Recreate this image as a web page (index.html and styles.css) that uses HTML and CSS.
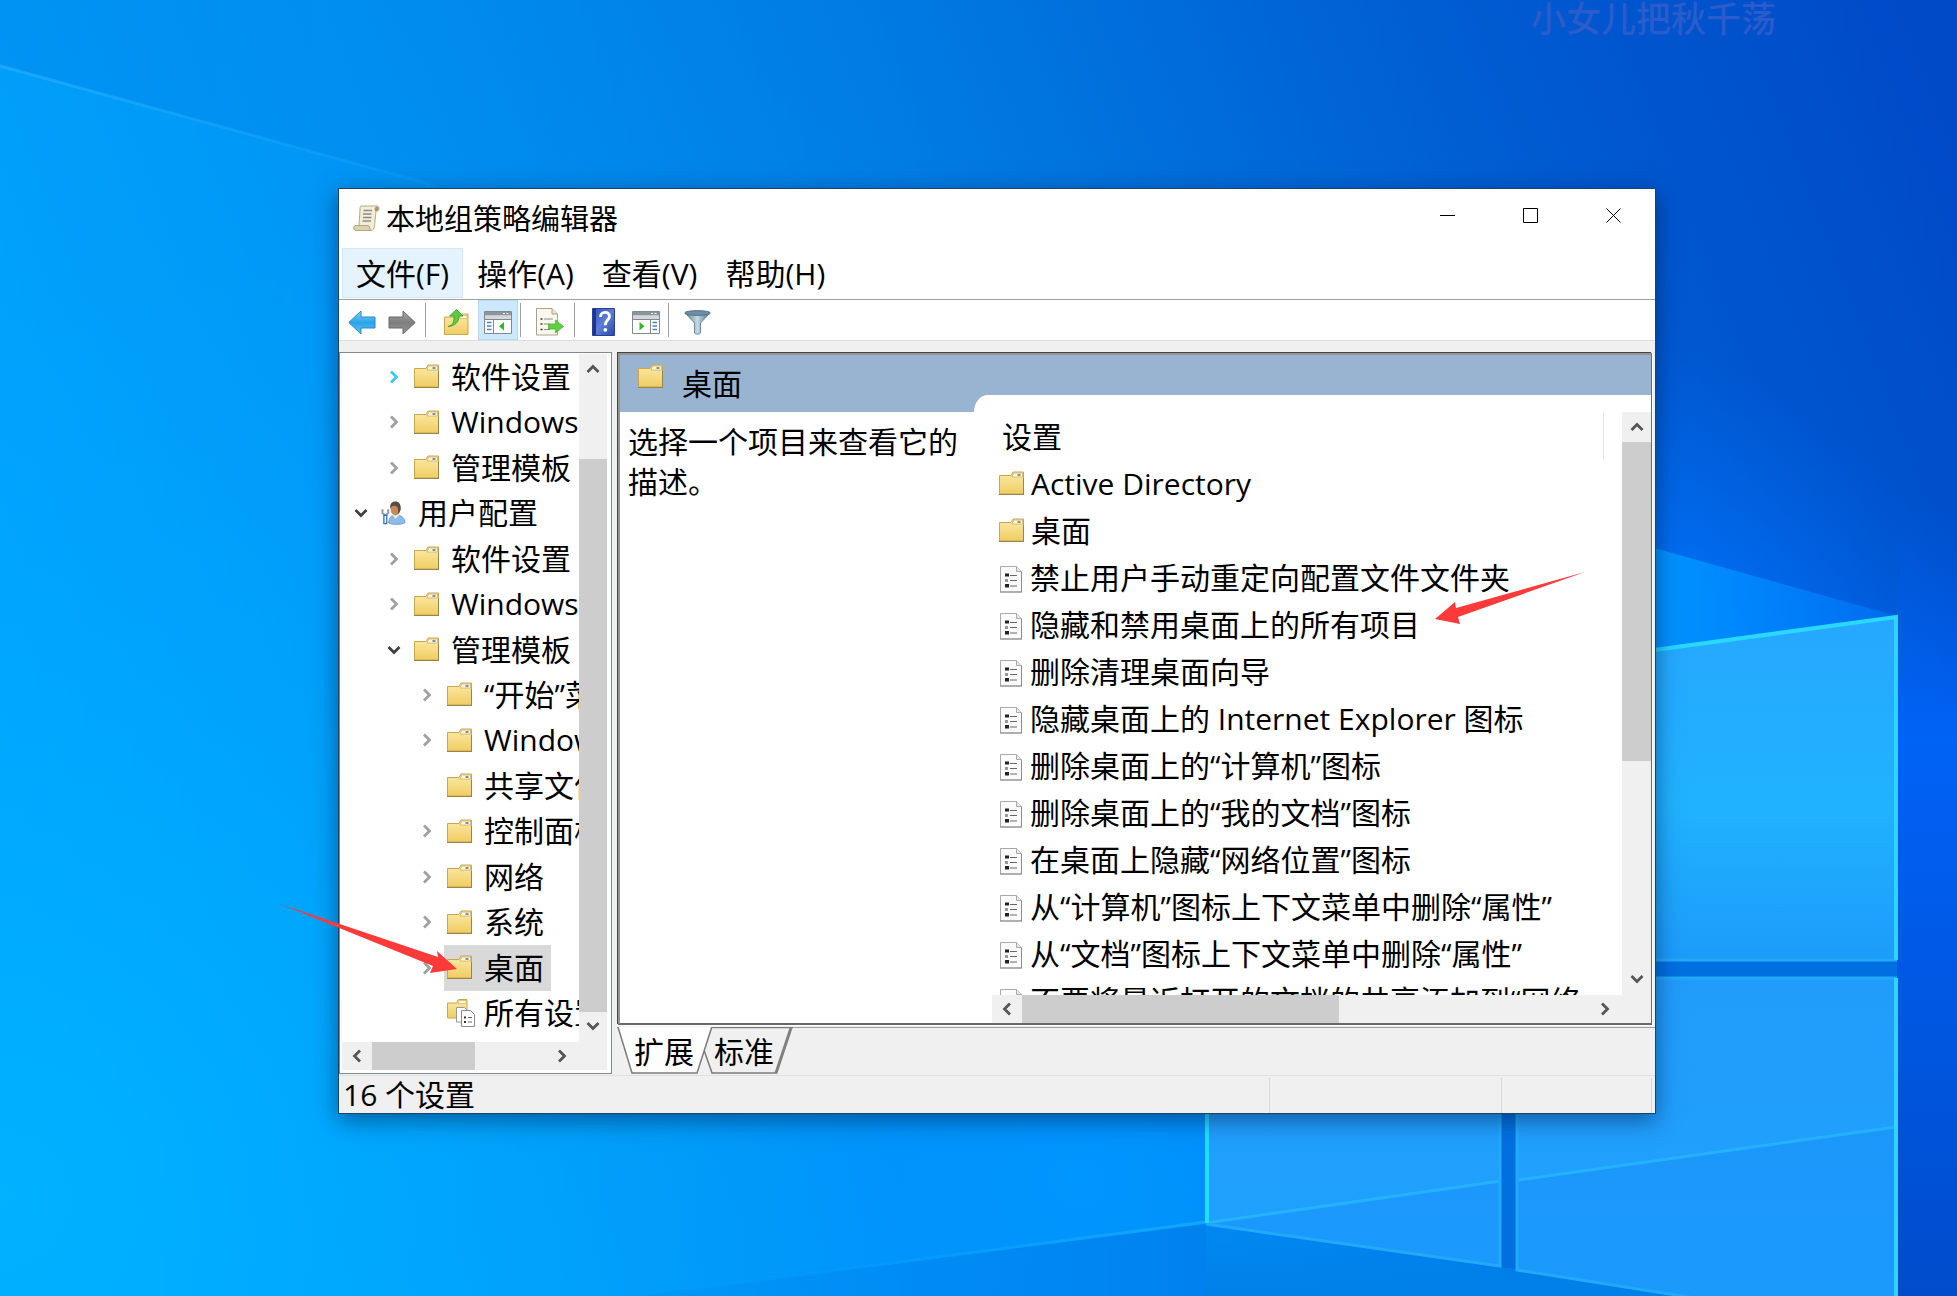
FILE: index.html
```html
<!DOCTYPE html>
<html lang="zh-CN">
<head>
<meta charset="utf-8">
<title>本地组策略编辑器</title>
<link rel="stylesheet" href="styles.css">
</head>
<body>
<svg class="sprites" aria-hidden="true">
  <defs>
    <linearGradient id="gFolder" x1="0" y1="0" x2="0" y2="1"><stop offset="0" stop-color="#fdeaa8"/><stop offset="1" stop-color="#f0cd62"/></linearGradient>
    <linearGradient id="gBlue" x1="0" y1="0" x2="0" y2="1"><stop offset="0" stop-color="#8fd4f8"/><stop offset=".5" stop-color="#2ba3ea"/><stop offset="1" stop-color="#5cc4f5"/></linearGradient>
    <linearGradient id="gGray" x1="0" y1="0" x2="0" y2="1"><stop offset="0" stop-color="#a8a8a8"/><stop offset=".5" stop-color="#7e7e7e"/><stop offset="1" stop-color="#989898"/></linearGradient>
    <linearGradient id="gHelp" x1="0" y1="0" x2="1" y2="1"><stop offset="0" stop-color="#2f4fb8"/><stop offset=".5" stop-color="#5d7fd8"/><stop offset="1" stop-color="#2745a8"/></linearGradient>
    <linearGradient id="gFunnel" x1="0" y1="0" x2="1" y2="0"><stop offset="0" stop-color="#5a7b92"/><stop offset=".5" stop-color="#c4d9e6"/><stop offset="1" stop-color="#456880"/></linearGradient>
  </defs>
  <symbol id="folder" viewBox="0 0 25 24">
    <path d="M.5 4.500h11.500l2-3.500h10.500v22h-24z" fill="url(#gFolder)" stroke="#c9a650"/>
    <path d="M14.500 2h9v4h-10.500z" fill="#fff8dc" stroke="#cdb06a" stroke-width=".8"/>
    <path d="M18.500 3h3v2h-3z" fill="#7d93a5"/>
    <path d="M0 23.500h25M24.500 7v16" stroke="#9a8448" fill="none"/>
  </symbol>
  <symbol id="policy" viewBox="0 0 24 27">
    <path d="M1.500.5h16l5 5v20.500h-21z" fill="#fbfbfb" stroke="#a9a9a9"/>
    <path d="M17.500.5v5h5" fill="#e8e8e8" stroke="#a9a9a9"/>
    <path d="M1 26h22M22.500 6v20" stroke="#8c8c8c" fill="none"/>
    <path d="M6 7.500h4v3H6zM6 18h4v3.500H6z" fill="#222"/><path d="M6 13h3v3H6z" fill="#999"/>
    <path d="M11 9.500h7M11 14.500h7M11 20h7" stroke="#666"/>
  </symbol>
  <symbol id="allset" viewBox="0 0 30 28">
    <path d="M.5 4h9l2-3.500h8.500v18.500h-19.500z" fill="url(#gFolder)" stroke="#c9a650"/>
    <path d="M12 1.500h7v3h-8z" fill="#fff8dc" stroke="#cdb06a" stroke-width=".7"/>
    <path d="M9.500 8.500h8l3 3v11.500h-11z" fill="#fff" stroke="#999"/>
    <path d="M14.500 11.500h9l4 4v12h-13z" fill="#fff" stroke="#8a8a8a"/>
    <path d="M17 17.500h2v2h-2zM17 22h2v2h-2z" fill="#333"/><path d="M21 18.500h4M21 23h4" stroke="#666"/>
  </symbol>
  <symbol id="user" viewBox="0 0 26 25">
    <path d="M8 23c0-6 3-8.500 8-8.500s9 3.500 9 8c-3 2.500-14 2.500-17 .5z" fill="#8bbbe8" stroke="#5f93c9" stroke-width=".8"/>
    <path d="M12 14.500l3 4 4-4z" fill="#e6f0fa"/>
    <ellipse cx="15" cy="8.500" rx="5" ry="6.500" fill="#c48a5c"/>
    <path d="M9.500 8C9 2 12 .5 15 .5c4 0 6 3 5.500 8.500-1 3-2 4-3 4.500 1-5 0-8-3-8.500-2 0-4 .5-5 3z" fill="#5a4a3e"/>
    <path d="M1.500 8.500v4l3 2.500 3-2.500v-4" fill="none" stroke="#8b97a3" stroke-width="2"/>
    <path d="M3 15h3v8.500H3z" fill="#fff" stroke="#2d6cc0" stroke-width="1.300"/>
  </symbol>
  <symbol id="scroll" viewBox="0 0 27 27">
    <path d="M8 1h16c2.500 0 2.500 4 .5 5H23L21.500 21c-.3 3-1.500 4.500-3.500 4.500H3.500c-3 0-3-5-.5-5h3L7 5C7 3 7 1.500 8 1z" fill="#f3edd8" stroke="#b5ab8c"/>
    <path d="M2.500 20.500h12.500c2.500 0 1 5 3.500 5h-15c-3.500 0-3.500-5-1-5z" fill="#ddd2ae" stroke="#b0a584"/>
    <path d="M22 6c-1-2 0-4.500 2-4.500 2 0 2.500 3.500.5 4.500z" fill="#a89a6c"/>
    <path d="M10.500 5.500h8.500M10 9h8.500M10 12.500h8.500M9.500 16h8.500" stroke="#8c8c8a" stroke-width="1.500"/>
  </symbol>
  <symbol id="arrow" viewBox="0 0 28 25">
    <path d="M.8 12.500L13 1v6h14v11H13v6z"/>
  </symbol>
  <symbol id="folderup" viewBox="0 0 26 28">
    <path d="M1.500 9h10l2-3h11.500v20.500h-23.500z" fill="url(#gFolder)" stroke="#c9a650"/>
    <path d="M17 7.500h7v3h-7z" fill="#fff8dc" stroke="#cdb06a" stroke-width=".7"/>
    <path d="M5 18.500c5-1 6-4 6-10.500H6.500L13.500 1.500 20 8h-4c0 6-4 10-11 10.500z" fill="#5ccb3f" stroke="#2f9a22" stroke-width=".8"/>
  </symbol>
  <symbol id="treepane" viewBox="0 0 28 23">
    <path d="M.5.5h27v22H.5z" fill="#fff" stroke="#808890"/>
    <path d="M1 1h26v3.500H1z" fill="#8c949c"/><path d="M19 2.500h2m1.500 0h2" stroke="#fff"/>
    <path d="M1 5h26v3H1z" fill="#d4d8dc"/>
    <path d="M9.500 8v14.500M1 8.500h26" stroke="#808890"/>
    <path d="M3 11.500h4.500M3 15h4.500M3 18.500h4.500" stroke="#4f83b8" stroke-width="1.500"/>
    <path d="M20 11v8.500l-5-4.200z" fill="#38b32c"/>
  </symbol>
  <symbol id="actionpane" viewBox="0 0 28 23">
    <path d="M.5.5h27v22H.5z" fill="#fff" stroke="#808890"/>
    <path d="M1 1h26v3.500H1z" fill="#8c949c"/><path d="M19 2.500h2m1.500 0h2" stroke="#fff"/>
    <path d="M1 5h26v3H1z" fill="#d4d8dc"/>
    <path d="M18.500 8v14.500M1 8.500h26" stroke="#808890"/>
    <path d="M20.500 11.500h4.500M20.500 15h4.500M20.500 18.500h4.500" stroke="#4f83b8" stroke-width="1.500"/>
    <path d="M7.500 11v8.500l5-4.200z" fill="#38b32c"/>
  </symbol>
  <symbol id="export" viewBox="0 0 28 28">
    <path d="M.5.500h15.500l5.500 5.500v21h-21z" fill="#fbf9ee" stroke="#a6a290"/>
    <path d="M16 .5v5.500h5.500" fill="#e8e4d0" stroke="#a6a290"/>
    <path d="M4.500 11h2M4.500 16h2M4.500 21.500h2" stroke="#333" stroke-width="1.500"/><path d="M8 11h9M8 16h6M8 21.500h6" stroke="#888"/>
    <path d="M12.500 16h7v-4l8 6.500-8 6.500V21h-7z" fill="#5fd042" stroke="#4db336" stroke-width=".8"/>
  </symbol>
  <symbol id="help" viewBox="0 0 23 28">
    <path d="M.5.5h22v27H.5z" fill="url(#gHelp)" stroke="#2a3f96"/><path d="M2.500 1v26" stroke="#1d3490" stroke-width="3"/>
    <path d="M8.500 9c0-6 9-6 9-.8 0 4-4.200 3.800-4.200 9" fill="none" stroke="#fff" stroke-width="2.800"/>
    <circle cx="13.300" cy="21.800" r="1.900" fill="#fff"/>
  </symbol>
  <symbol id="funnel" viewBox="0 0 27 25">
    <path d="M1 3l9.500 10v10c1 1.500 5 1.500 6 0V13L26 3z" fill="url(#gFunnel)" stroke="#6d8ca1"/>
    <ellipse cx="13.500" cy="3" rx="12.800" ry="2.400" fill="#6d8ea5" stroke="#55748a"/>
  </symbol>
  <symbol id="chev" viewBox="0 0 16 16"><path d="M5 2.500l5.500 5.500-5.500 5.500" fill="none" stroke="currentColor" stroke-width="2.800"/></symbol>
</svg>

<svg class="wallpaper" viewBox="0 0 1957 1296" preserveAspectRatio="none" aria-hidden="true">
  <defs>
    <linearGradient id="sky" x1="0" y1="900" x2="1957" y2="150" gradientUnits="userSpaceOnUse">
      <stop offset="0" stop-color="#00a8ff"/><stop offset=".3" stop-color="#0094f4"/><stop offset=".55" stop-color="#007ae2"/><stop offset=".8" stop-color="#005cd2"/><stop offset="1" stop-color="#004ac8"/>
    </linearGradient>
    <radialGradient id="corner" cx="0" cy="1200" r="1000" gradientUnits="userSpaceOnUse"><stop offset="0" stop-color="#00b2ff"/><stop offset="1" stop-color="#00a0ff" stop-opacity="0"/></radialGradient>
    <radialGradient id="glow" cx="1500" cy="850" r="540" gradientUnits="userSpaceOnUse"><stop offset="0" stop-color="#008cff"/><stop offset=".6" stop-color="#0074fc" stop-opacity=".8"/><stop offset="1" stop-color="#0068f0" stop-opacity="0"/></radialGradient>
    <radialGradient id="glow2" cx="1080" cy="1180" r="440" gradientUnits="userSpaceOnUse"><stop offset="0" stop-color="#0096ff"/><stop offset=".5" stop-color="#0096ff" stop-opacity=".7"/><stop offset="1" stop-color="#009cff" stop-opacity="0"/></radialGradient>
    <linearGradient id="shade" x1="0" y1="0" x2="900" y2="0" gradientUnits="userSpaceOnUse"><stop offset="0" stop-color="#006cd8" stop-opacity=".22"/><stop offset="1" stop-color="#006cd8" stop-opacity="0"/></linearGradient>
    <linearGradient id="foot" x1="0" y1="1200" x2="0" y2="1296" gradientUnits="userSpaceOnUse"><stop offset="0" stop-color="#0084ee" stop-opacity=".5"/><stop offset="1" stop-color="#0080e8"/></linearGradient>
    <linearGradient id="footL" x1="640" y1="0" x2="1206" y2="0" gradientUnits="userSpaceOnUse"><stop offset="0" stop-color="#0088f0" stop-opacity=".2"/><stop offset="1" stop-color="#0080ec" stop-opacity=".9"/></linearGradient>
    <linearGradient id="beam" x1="0" y1="0" x2="1" y2="0"><stop offset="0" stop-color="#2cb4ff"/><stop offset="1" stop-color="#2cb4ff" stop-opacity=".25"/></linearGradient>
    <linearGradient id="beam2" x1="640" y1="0" x2="1206" y2="0" gradientUnits="userSpaceOnUse"><stop offset="0" stop-color="#0098ff" stop-opacity="0"/><stop offset="1" stop-color="#14a8ff"/></linearGradient>
    <linearGradient id="ray" x1="1655" y1="0" x2="1900" y2="0" gradientUnits="userSpaceOnUse"><stop offset="0" stop-color="#0094ff"/><stop offset="1" stop-color="#007cff" stop-opacity=".5"/></linearGradient>
    <linearGradient id="paneT" x1="0" y1="616" x2="0" y2="960" gradientUnits="userSpaceOnUse"><stop offset="0" stop-color="#26a8ff"/><stop offset=".55" stop-color="#20b2ff"/><stop offset="1" stop-color="#1c9cfa"/></linearGradient>
    <linearGradient id="paneB" x1="0" y1="977" x2="0" y2="1296" gradientUnits="userSpaceOnUse"><stop offset="0" stop-color="#219cfb"/><stop offset="1" stop-color="#20a2ff"/></linearGradient>
    <linearGradient id="right" x1="0" y1="500" x2="0" y2="1296" gradientUnits="userSpaceOnUse"><stop offset="0" stop-color="#0058e0" stop-opacity="0"/><stop offset=".3" stop-color="#0062f6"/><stop offset="1" stop-color="#004ccc"/></linearGradient>
  </defs>
  <path d="M0 0h1957v1296H0z" fill="url(#sky)"/>
  <path d="M0 0h1957v1296H0z" fill="url(#corner)"/>
  <path d="M0 66L430 184 900 320V0H0z" fill="url(#shade)"/>
  <path d="M0 66L430 184" stroke="url(#beam)" stroke-width="3" opacity=".6"/>
  <path d="M600 200h1357v1096H600z" fill="url(#glow)"/>
  <path d="M600 700h900v596H600z" fill="url(#glow2)"/>
  <path d="M1897 500h60v796h-60z" fill="url(#right)"/>
  <path d="M640 1296l566-72v72z" fill="url(#footL)"/>
  <path d="M1206 1224l310 44 381 62v-34l-100 0H1206z" fill="url(#foot)"/>
  <path d="M640 1296l566-74" stroke="url(#beam2)" stroke-width="3"/>
  <path d="M1640 544l257 72-257 36z" fill="url(#ray)"/>
  <path d="M1500 960h397v17h-397zM1501 977h15v292l-15-2z" fill="#0070e0"/>
  <path d="M1640 651l257-35v344h-257z" fill="url(#paneT)"/>
  <path d="M1206 1100h295v167l-295-43z" fill="url(#paneB)"/>
  <path d="M1516 977h381v353l-381-60z" fill="url(#paneB)"/>
  <path d="M1206 1224l295-43v86zM1516 1180l381-54v204l-381-60z" fill="#0068e8" opacity=".14"/>
  <path d="M1206 1223l295-42M1518 1180l378-53" stroke="#27baff" stroke-width="3" opacity=".75"/>
  <path d="M1640 960h257M1500 1100v166l-294-42M1640 978h257M1517 1100v170l381 60" fill="none" stroke="#22aaf8" stroke-width="3"/>
  <path d="M1207 1100v123" stroke="#20e0ff" stroke-width="4"/>
  <path d="M1640 652l256-35v343M1896 978v318" fill="none" stroke="#28d8ff" stroke-width="4"/>
</svg>

<div class="watermark">小女儿把秋千荡</div>

<main class="window">
  <header class="titlebar">
    <svg class="title-icon"><use href="#scroll"/></svg>
    <h1>本地组策略编辑器</h1>
    <div class="caption-buttons">
      <button aria-label="最小化"><svg viewBox="0 0 15 15"><path d="M0 7.500h15"/></svg></button>
      <button aria-label="最大化"><svg viewBox="0 0 15 15"><path d="M.5.5h14v14H.5z"/></svg></button>
      <button aria-label="关闭"><svg viewBox="0 0 15 15"><path d="M.5.5l14 14M14.500.5l-14 14"/></svg></button>
    </div>
  </header>
  <nav class="menubar">
    <button class="active">文件(F)</button><button>操作(A)</button><button>查看(V)</button><button>帮助(H)</button>
  </nav>
  <div class="toolbar" role="toolbar">
    <button class="tool" aria-label="后退"><svg width="28" height="25" fill="url(#gBlue)" stroke="#2a86c4"><use href="#arrow"/></svg></button>
    <button class="tool" aria-label="前进"><svg class="flip" width="28" height="25" fill="url(#gGray)" stroke="#696969"><use href="#arrow"/></svg></button>
    <span class="sep"></span>
    <button class="tool wide" aria-label="上一级"><svg width="26" height="28"><use href="#folderup"/></svg></button>
    <button class="tool on" aria-label="显示控制台树"><svg width="28" height="23"><use href="#treepane"/></svg></button>
    <span class="sep tight"></span>
    <button class="tool wide" aria-label="导出列表"><svg width="28" height="28"><use href="#export"/></svg></button>
    <span class="sep tight"></span>
    <button class="tool wide" aria-label="帮助"><svg width="23" height="28"><use href="#help"/></svg></button>
    <button class="tool" aria-label="显示操作窗格"><svg width="28" height="23"><use href="#actionpane"/></svg></button>
    <span class="sep tight"></span>
    <button class="tool wide" aria-label="筛选器"><svg width="27" height="25"><use href="#funnel"/></svg></button>
  </div>

  <div class="workspace">
    <aside class="tree-pane">
      <ul class="tree">
        <li class="l1"><svg class="chev hot"><use href="#chev"/></svg><svg class="ico"><use href="#folder"/></svg><span>软件设置</span></li>
        <li class="l1"><svg class="chev"><use href="#chev"/></svg><svg class="ico"><use href="#folder"/></svg><span>Windows 设置</span></li>
        <li class="l1"><svg class="chev"><use href="#chev"/></svg><svg class="ico"><use href="#folder"/></svg><span>管理模板</span></li>
        <li class="l0"><svg class="chev open"><use href="#chev"/></svg><svg class="ico"><use href="#user"/></svg><span>用户配置</span></li>
        <li class="l1"><svg class="chev"><use href="#chev"/></svg><svg class="ico"><use href="#folder"/></svg><span>软件设置</span></li>
        <li class="l1"><svg class="chev"><use href="#chev"/></svg><svg class="ico"><use href="#folder"/></svg><span>Windows 设置</span></li>
        <li class="l1"><svg class="chev open"><use href="#chev"/></svg><svg class="ico"><use href="#folder"/></svg><span>管理模板</span></li>
        <li class="l2"><svg class="chev"><use href="#chev"/></svg><svg class="ico"><use href="#folder"/></svg><span>“开始”菜单和任务栏</span></li>
        <li class="l2"><svg class="chev"><use href="#chev"/></svg><svg class="ico"><use href="#folder"/></svg><span>Windows 组件</span></li>
        <li class="l2"><svg class="chev none"></svg><svg class="ico"><use href="#folder"/></svg><span>共享文件夹</span></li>
        <li class="l2"><svg class="chev"><use href="#chev"/></svg><svg class="ico"><use href="#folder"/></svg><span>控制面板</span></li>
        <li class="l2"><svg class="chev"><use href="#chev"/></svg><svg class="ico"><use href="#folder"/></svg><span>网络</span></li>
        <li class="l2"><svg class="chev"><use href="#chev"/></svg><svg class="ico"><use href="#folder"/></svg><span>系统</span></li>
        <li class="l2 selected"><svg class="chev"><use href="#chev"/></svg><svg class="ico"><use href="#folder"/></svg><span>桌面</span></li>
        <li class="l2"><svg class="chev none"></svg><svg class="ico big"><use href="#allset"/></svg><span>所有设置</span></li>
      </ul>
      <div class="vbar">
        <button aria-label="向上滚动"><svg class="up"><use href="#chev"/></svg></button>
        <i style="flex-grow:75"></i><i class="thumb" style="flex-grow:554"></i>
        <button aria-label="向下滚动"><svg class="down"><use href="#chev"/></svg></button>
      </div>
      <div class="hbar">
        <button aria-label="向左滚动"><svg class="left"><use href="#chev"/></svg></button>
        <i class="thumb" style="flex-grow:104"></i><i style="flex-grow:74"></i>
        <button aria-label="向右滚动"><svg><use href="#chev"/></svg></button>
      </div>
      <div class="grip"></div>
    </aside>

    <section class="detail">
      <div class="detail-frame">
        <div class="detail-head">
          <svg class="ico"><use href="#folder"/></svg><h2>桌面</h2>
        </div>
        <div class="detail-body">
          <p class="desc">选择一个项目来查看它的描述。</p>
          <div class="settings">
            <div class="table-clip">
              <table>
                <thead><tr><th>设置</th></tr></thead>
                <tbody>
                  <tr><td><svg class="ico"><use href="#folder"/></svg>Active Directory</td></tr>
                  <tr><td><svg class="ico"><use href="#folder"/></svg>桌面</td></tr>
                  <tr><td><svg class="doc"><use href="#policy"/></svg>禁止用户手动重定向配置文件文件夹</td></tr>
                  <tr><td><svg class="doc"><use href="#policy"/></svg>隐藏和禁用桌面上的所有项目</td></tr>
                  <tr><td><svg class="doc"><use href="#policy"/></svg>删除清理桌面向导</td></tr>
                  <tr><td><svg class="doc"><use href="#policy"/></svg>隐藏桌面上的 Internet Explorer 图标</td></tr>
                  <tr><td><svg class="doc"><use href="#policy"/></svg>删除桌面上的“计算机”图标</td></tr>
                  <tr><td><svg class="doc"><use href="#policy"/></svg>删除桌面上的“我的文档”图标</td></tr>
                  <tr><td><svg class="doc"><use href="#policy"/></svg>在桌面上隐藏“网络位置”图标</td></tr>
                  <tr><td><svg class="doc"><use href="#policy"/></svg>从“计算机”图标上下文菜单中删除“属性”</td></tr>
                  <tr><td><svg class="doc"><use href="#policy"/></svg>从“文档”图标上下文菜单中删除“属性”</td></tr>
                  <tr><td><svg class="doc"><use href="#policy"/></svg>不要将最近打开的文档的共享添加到“网络...</td></tr>
                </tbody>
              </table>
            </div>
            <div class="vbar">
              <button aria-label="向上滚动"><svg class="up"><use href="#chev"/></svg></button>
              <i class="thumb" style="flex-grow:320"></i><i style="flex-grow:204"></i>
              <button aria-label="向下滚动"><svg class="down"><use href="#chev"/></svg></button>
            </div>
            <div class="hbar">
              <button aria-label="向左滚动"><svg class="left"><use href="#chev"/></svg></button>
              <i class="thumb" style="flex-grow:317"></i><i style="flex-grow:253"></i>
              <button aria-label="向右滚动"><svg><use href="#chev"/></svg></button>
            </div>
            <div class="grip"></div>
          </div>
        </div>
      </div>
      <nav class="tabs">
        <svg class="tab-shapes" width="176" height="48" aria-hidden="true">
          <path d="M94 1.500h80l-15 44.500H94l-8-23z" fill="#f0f0f0"/>
          <path d="M1 0l14 46h65L94 0z" fill="#fff"/>
          <path d="M1 0l14 46h65L94.500 1M87 23l8 23h65M94 .5h82" fill="none" stroke="#7b7b7b" stroke-width="1.500"/>
          <path d="M174 1l-15 45" stroke="#808080" stroke-width="3"/>
        </svg>
        <button>扩展</button><button>标准</button>
      </nav>
    </section>
  </div>

  <footer class="status"><span>16 个设置</span><span></span><span></span></footer>
</main>

<svg class="pointer one" viewBox="0 0 180 72" aria-hidden="true"><path d="M0 0L158 53l-1-6 20 18-27 4 3-7z"/></svg>
<svg class="pointer two" viewBox="0 0 152 54" aria-hidden="true"><path d="M150 0L21 36l-1-6L0 47l25 5-2-7z"/></svg>
</body>
</html>
```
FILE: styles.css
```css
* { box-sizing: border-box; }
html, body { height: 100%; }
body {
  margin: 0;
  position: relative;
  overflow: hidden;
  background: #0082ea;
  color: #000;
  font: 30px/40px "Open Sans", "Noto Sans CJK SC", sans-serif;
}
button {
  margin: 0;
  padding: 0;
  border: 0;
  background: none;
  color: inherit;
  font: inherit;
}
svg { display: block; flex: none; }
h1, h2, p, ul { margin: 0; padding: 0; font-weight: 400; }
ul { list-style: none; }

.sprites { position: absolute; width: 0; height: 0; }
.wallpaper { position: absolute; inset: 0; width: 100%; height: 100%; }
.watermark {
  position: absolute;
  top: 0;
  right: 181px;
  font-size: 35px;
  font-weight: 500;
  line-height: 38px;
  color: #2a5ccb;
}

.window {
  position: absolute;
  inset: 188px 301px 182px 338px;
  display: flex;
  flex-direction: column;
  border: 1px solid #1b4468;
  background: #f0f0f0;
  box-shadow: 0 6px 22px rgba(0, 20, 60, .5);
}

.titlebar { display: flex; align-items: center; height: 59px; padding-left: 14px; background: #fff; }
.title-icon { width: 27px; height: 27px; }
.titlebar h1 { flex: 1; margin-left: 6px; font-size: 29px; }
.caption-buttons { display: flex; align-self: stretch; }
.caption-buttons button { display: flex; justify-content: center; width: 83px; padding-top: 19px; }
.caption-buttons svg { width: 15px; height: 15px; fill: none; stroke: #000; }

.menubar { display: flex; height: 52px; padding: 0 3px 1px; border-bottom: 1px solid #a0a0a0; background: #fff; }
.menubar button { padding: 2px 14px 0; }
.menubar .active { background: #e5f3ff; box-shadow: inset 0 0 0 1px #d3e8fa; }

.toolbar { display: flex; align-items: center; height: 41px; padding-left: 3px; border-bottom: 1px solid #dcdcdc; background: #fff; }
.tool { display: flex; align-items: center; justify-content: center; width: 40px; height: 40px; padding-top: 4px; }
.tool.wide { width: 49px; padding-left: 4px; }
.tool.on { background: #cce8ff; box-shadow: inset 0 0 0 1px #b4daf8; }
.sep { width: 1px; height: 34px; margin: 0 3px; background: #a0a0a0; }
.sep.tight { margin: 0 2px; }
.flip { transform: scaleX(-1); }

.workspace { flex: 1; display: grid; grid-template-columns: 273px 1fr; gap: 5px; min-height: 0; margin-top: 11px; }

.tree-pane {
  display: grid;
  grid-template: minmax(0, 1fr) 28px / minmax(0, 1fr) 28px;
  min-height: 0;
  margin-bottom: 1px;
  padding: 1px 4px 3px 2px;
  border: 1px solid #828790;
  background: #fff;
}
.tree { display: grid; grid-auto-rows: 1fr; padding-bottom: 6px; overflow: hidden; }
.tree li { display: flex; align-items: center; min-width: 0; white-space: nowrap; }
.l0 { padding-left: 11px; }
.l1 { padding-left: 44px; }
.l2 { padding-left: 77px; }
.chev { width: 16px; height: 16px; margin-right: 9px; color: #a0a0a0; }
.chev.hot { color: #3cc8f0; }
.chev.open { color: #404040; transform: rotate(90deg); }
.ico { width: 25px; height: 24px; }
.tree .ico { margin: 0 5px 1px 3px; }
.tree .big { width: 30px; height: 28px; margin-right: 0; }
.tree span { padding: 0 7px; }
.selected { background: linear-gradient(#d9d9d9, #d9d9d9) 102px 0 / 107px 100% no-repeat; }

.vbar, .hbar { display: flex; background: #f0f0f0; }
.vbar { flex-direction: column; }
.vbar button, .hbar button { display: flex; align-items: center; justify-content: center; flex: 0 0 30px; color: #555; }
.vbar button:last-child { padding-bottom: 3px; }
.hbar button:last-child { padding-right: 4px; }
.vbar svg, .hbar svg { width: 16px; height: 16px; }
.vbar i, .hbar i { flex-basis: 0; }
.thumb { background: #cdcdcd; }
.up { transform: rotate(-90deg); }
.down { transform: rotate(90deg); }
.left { transform: rotate(180deg); }
.grip { background: #f0f0f0; }

.detail { display: flex; flex-direction: column; min-width: 0; min-height: 0; }
.detail-frame {
  flex: 1;
  display: flex;
  flex-direction: column;
  min-height: 0;
  margin: 1px 3px 2px 1px;
  border: solid #949494;
  border-width: 2px 1px 2px 2px;
  border-right-color: #696969;
  border-bottom-color: #696969;
  background: #fff;
  box-shadow: -1px -1px 0 #444, 1px 1px 0 #fff;
}
.detail-head { position: relative; display: flex; align-items: flex-start; height: 57px; padding: 9px 0 0 18px; background: #99b4d1; }
.detail-head::after {
  content: "";
  position: absolute;
  left: 354px;
  right: 0;
  bottom: 0;
  height: 17px;
  border-top-left-radius: 14px 17px;
  background: #fff;
}
.detail-head h2 { margin-left: 19px; font-size: 30px; }
.detail-body { flex: 1; display: grid; grid-template-columns: 372px minmax(0, 1fr); min-height: 0; }
.desc { padding: 10px 24px 0 8px; }

.settings { display: grid; grid-template: minmax(0, 1fr) 28px / minmax(0, 1fr) 29px; min-height: 0; }
.table-clip { overflow: hidden; padding-right: 18px; }
table { width: 100%; border-collapse: collapse; table-layout: fixed; }
th { height: 48px; padding: 1px 0 0 10px; border-right: 1px solid #e5e5e5; font-weight: 400; text-align: left; }
td { height: 47px; padding: 0 0 0 7px; white-space: nowrap; }
td svg { display: inline-block; width: 24px; margin-right: 7px; }
td .ico { vertical-align: 0; }
td .doc { height: 27px; vertical-align: -4px; }

.tabs { position: relative; display: flex; gap: 20px; height: 48px; padding-left: 17px; border-top: 1px solid #a0a0a0; }
.tab-shapes { position: absolute; left: 0; top: -1px; }
.tabs button { position: relative; height: 48px; }

.status { display: grid; grid-template-columns: 1fr 232px 153px; height: 38px; padding-top: 2px; border-top: 1px solid #dfdfdf; }
.status span { padding-left: 4px; border-right: 1px solid #d7d7d7; line-height: 34px; }
.status span:last-child { margin-right: 3px; }

.pointer { position: absolute; fill: #fb3a3a; }
.one { left: 280px; top: 904px; width: 180px; height: 72px; }
.two { left: 1435px; top: 572px; width: 152px; height: 54px; }
```
